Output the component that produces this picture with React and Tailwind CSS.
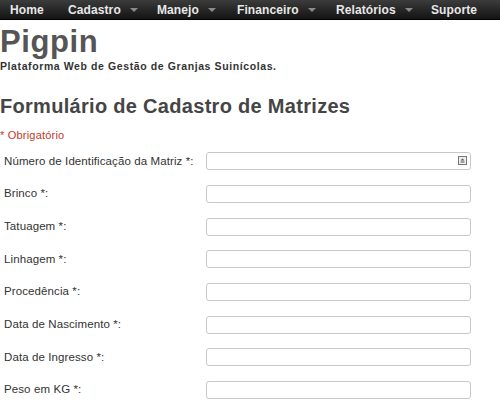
import React from 'react';

const menu = [
    { label: 'Home', arrow: false, w: 'w-[58px]' },
    { label: 'Cadastro', arrow: true, w: 'w-[89px]' },
    { label: 'Manejo', arrow: true, w: 'w-[80px]' },
    { label: 'Financeiro', arrow: true, w: 'w-[99px]' },
    { label: 'Relatórios', arrow: true, w: 'w-[95px]' },
    { label: 'Suporte', arrow: false, w: '' },
];

const fields = [
    'Número de Identificação da Matriz *:',
    'Brinco *:',
    'Tatuagem *:',
    'Linhagem *:',
    'Procedência *:',
    'Data de Nascimento *:',
    'Data de Ingresso *:',
    'Peso em KG *:',
];

function Caret() {
    return (
        <svg width="8" height="5" viewBox="0 0 8 5" className="ml-[9px] mt-[2px]">
            <path d="M0 0h8L4 4z" fill="#8a8a8a" />
        </svg>
    );
}

export default function App() {
    return (
        <div className="w-[500px] h-[400px] overflow-hidden bg-white font-['Liberation_Sans',Arial,sans-serif]">
            {/* Top nav */}
            <nav className="h-[20px] flex items-center pl-[10px] bg-gradient-to-b from-[#3c3c3c] to-[#141414] border-b border-[#000]">
                {menu.map((item) => (
                    <div key={item.label} className={`flex items-center shrink-0 ${item.w}`}>
                        <span className="text-[12px] font-bold text-[#e8e8e8] tracking-[0.1px]">{item.label}</span>
                        {item.arrow && <Caret />}
                    </div>
                ))}
            </nav>

            {/* Header */}
            <div className="pt-[5px]">
                <h1 className="text-[31px] leading-[34px] font-bold text-[#555] tracking-[0.6px]">Pigpin</h1>
                <p className="text-[10.5px] font-bold text-[#333] tracking-[0.6px]">
                    Plataforma Web de Gestão de Granjas Suinícolas.
                </p>
            </div>

            <h2 className="mt-[20px] text-[20px] leading-[22px] font-bold text-[#454545] tracking-[0.3px]">
                Formulário de Cadastro de Matrizes
            </h2>

            <p className="mt-[10px] text-[11px] text-[#c0392b] tracking-[0.2px]">* Obrigatório</p>

            <form className="mt-[9px] flex flex-col gap-[14.7px]">
                {fields.map((label, i) => (
                    <div key={label} className="flex items-center h-[18px]">
                        <label className="w-[206px] pl-[4px] text-[11.5px] text-[#333] tracking-[0.1px]">{label}</label>
                        <div className="relative w-[265px] h-[18px] rounded-[3px] border border-[#c8c8c8] bg-white">
                            {i === 0 && (
                                <span className="absolute right-[3px] top-[3px] w-[9px] h-[9px] border border-[#777] bg-[#eee] flex items-center justify-center">
                                    <svg width="5" height="5" viewBox="0 0 5 5">
                                        <path d="M2.5 0.5L4.5 2.5H0.5z M0.5 3.5h4v1h-4z" fill="#555" />
                                    </svg>
                                </span>
                            )}
                        </div>
                    </div>
                ))}
            </form>
        </div>
    );
}
